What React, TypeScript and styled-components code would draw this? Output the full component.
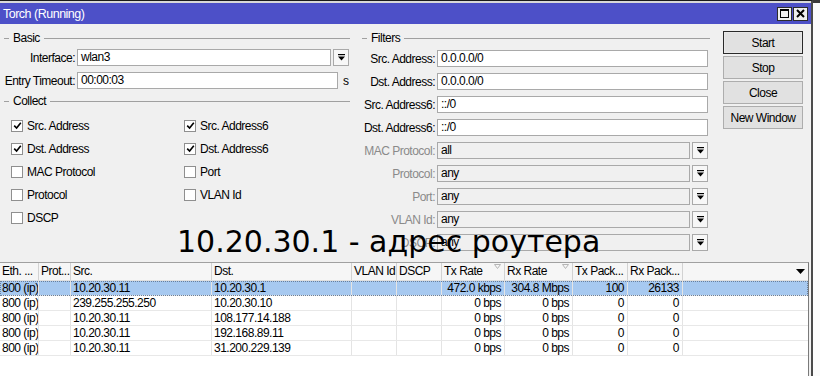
import styled, { createGlobalStyle } from "styled-components";

const FONT = `"Liberation Sans", Arial, sans-serif`;

const GlobalStyle = createGlobalStyle`
  html, body {
    margin: 0;
    padding: 0;
    background: #fff;
    overflow: hidden;
  }
  body {
    font-family: ${FONT};
    font-size: 12px;
    letter-spacing: -0.5px;
    color: #000;
  }
`;

// Экран и окно
const Screen = styled.div`
  width: 820px;
  height: 376px;
  display: flex;
  position: relative;
  overflow: hidden;
  background: #fff;
`;

const Window = styled.div`
  width: 813px;
  height: 376px;
  flex: none;
  box-sizing: border-box;
  display: flex;
  flex-direction: column;
  background: #f0f0f0;
  border-top: 1px solid #1b1b1b;
  border-right: 2px solid #4a4a4a;
`;

const SideStrip = styled.div`
  flex: 1;
  background: #fbfbfb;
  border-top: 3px solid #3a3a3a;
`;

const TitleBar = styled.div`
  height: 21px;
  flex: none;
  display: flex;
  align-items: center;
  justify-content: space-between;
  padding: 0 3px 0 3px;
  background: #4d50c8;
  border-top: 2px solid #d9d9d9;
  color: #fff;
`;

const TitleText = styled.span`
  font-size: 12.5px;
`;

const TitleButtons = styled.div`
  display: flex;
  gap: 1px;
`;

const TitleButton = styled.div`
  width: 15px;
  height: 14px;
  box-sizing: border-box;
  border: 1px solid #2c2c2c;
  background: #eeeeee;
  display: grid;
  place-items: center;
`;

// Верхняя часть: группы и кнопки
const TopArea = styled.div`
  height: 238px;
  flex: none;
  display: flex;
`;

const LeftColumn = styled.div`
  width: 355px;
  flex: none;
  padding-top: 7px;
  box-sizing: border-box;
`;

const FiltersColumn = styled.div`
  width: 352px;
  margin-left: 5px;
  flex: none;
  padding-top: 7px;
  box-sizing: border-box;
`;

const ButtonsColumn = styled.div`
  width: 80px;
  margin-left: 11px;
  padding-top: 7px;
  display: flex;
  flex-direction: column;
  gap: 2px;
`;

const GroupTitle = styled.div<{ $indent: number; $end: number; $top?: number }>`
  display: flex;
  align-items: center;
  height: 14px;
  gap: 4px;
  margin-top: ${(p) => p.$top ?? 0}px;
  margin-right: ${(p) => p.$end}px;

  &::before {
    content: "";
    width: 5px;
    height: 1px;
    margin-left: ${(p) => p.$indent}px;
    background: #a0a0a0;
  }
  &::after {
    content: "";
    flex: 1;
    height: 1px;
    background: #a0a0a0;
  }
`;

const Rows = styled.div<{ $top: number }>`
  margin-top: ${(p) => p.$top}px;
`;

const FieldRow = styled.div`
  display: flex;
  align-items: center;
  height: 23px;
`;

const FieldLabel = styled.span<{ $width: number; $muted?: boolean }>`
  width: ${(p) => p.$width}px;
  flex: none;
  text-align: right;
  white-space: nowrap;
  color: ${(p) => (p.$muted ? "#8a8a8a" : "#000")};
`;

const TextBox = styled.div<{ $width: number; $muted?: boolean }>`
  width: ${(p) => p.$width}px;
  height: 17px;
  flex: none;
  box-sizing: border-box;
  margin-left: 2px;
  padding: 0 3px;
  line-height: 15px;
  border: 1px solid #a9a9a9;
  background: ${(p) => (p.$muted ? "#f0f0f0" : "#fff")};
  white-space: nowrap;
  overflow: hidden;
`;

const DropButton = styled.div`
  width: 16px;
  height: 17px;
  flex: none;
  box-sizing: border-box;
  margin-left: 2px;
  border: 1px solid #a9a9a9;
  background: #f7f7f7;
  display: grid;
  place-items: center;
`;

const Unit = styled.span`
  margin-left: 5px;
`;

const CheckGrid = styled.div`
  margin-top: 6px;
  padding-left: 11px;
  display: grid;
  grid-template-columns: 173px 1fr;
  grid-auto-rows: 23px;
`;

const CheckItem = styled.label`
  display: flex;
  align-items: center;
  gap: 4px;
`;

const Box = styled.span`
  width: 12px;
  height: 12px;
  box-sizing: border-box;
  border: 1px solid #8f8f8f;
  background: #fff;
  display: grid;
  place-items: center;
`;

const Button = styled.div<{ $primary?: boolean }>`
  height: 23px;
  box-sizing: border-box;
  display: flex;
  align-items: center;
  justify-content: center;
  background: #e1e1e1;
  border: 1px solid ${(p) => (p.$primary ? "#2a2a2a" : "#adadad")};
  box-shadow: ${(p) => (p.$primary ? "inset 0 0 0 1px #e8e8e8" : "none")};
`;

// Таблица
const COLUMNS = "39px 32px 141px 140px 45px 45px 63px 68px 55px 55px 1fr";

const Table = styled.div`
  flex: 1;
  width: 809px;
  box-sizing: border-box;
  background: #fff;
  border-top: 1px solid #a0a0a0;
  border-right: 1px solid #7a7a7a;
`;

const HeaderRow = styled.div`
  display: grid;
  grid-template-columns: ${COLUMNS};
  height: 17px;
  background: #f6f6f6;
  border-bottom: 1px solid #e0e0e0;
`;

const HeaderCell = styled.div`
  position: relative;
  padding-left: 2px;
  line-height: 17px;
  white-space: nowrap;
  overflow: hidden;
  border-right: 1px solid #d2d2d2;

  &:last-child {
    border-right: none;
  }
`;

const SortMark = styled.svg`
  position: absolute;
  top: 1px;
  right: 3px;
`;

const MenuMark = styled.svg`
  position: absolute;
  top: 6px;
  right: 3px;
`;

const DataRow = styled.div<{ $selected?: boolean }>`
  display: grid;
  grid-template-columns: ${COLUMNS};
  height: 15px;
  box-sizing: border-box;
  border-bottom: 1px solid #e8e8e8;
  background: ${(p) => (p.$selected ? "#a7c9f0" : "#fff")};
  outline: ${(p) => (p.$selected ? "1px dotted #6a7f9a" : "none")};
  outline-offset: -1px;
`;

const Cell = styled.div<{ $right?: boolean }>`
  line-height: 14px;
  padding: 0 3px 0 2px;
  text-align: ${(p) => (p.$right ? "right" : "left")};
  white-space: nowrap;
  overflow: hidden;
  border-right: 1px solid #e4e4e4;

  &:last-child {
    border-right: none;
  }
`;

// Надпись поверх окна
const Caption = styled.div`
  position: absolute;
  left: 177px;
  top: 227px;
  font-family: "DejaVu Sans", sans-serif;
  font-size: 30px;
  line-height: 30px;
  letter-spacing: 0;
  color: #000;
  white-space: nowrap;
`;

const DropIcon = () => (
  <svg width="7" height="7" viewBox="0 0 7 7">
    <rect x="0" y="0" width="7" height="1.2" fill="#000" />
    <polygon points="0,2.4 7,2.4 3.5,6.4" fill="#000" />
  </svg>
);

const CheckIcon = () => (
  <svg width="9" height="9" viewBox="0 0 9 9">
    <path d="M1.2 4.6 L3.6 7 L7.8 1.8" fill="none" stroke="#000" strokeWidth="1.6" />
  </svg>
);

const collect = [
  { label: "Src. Address", on: true },
  { label: "Src. Address6", on: true },
  { label: "Dst. Address", on: true },
  { label: "Dst. Address6", on: true },
  { label: "MAC Protocol", on: false },
  { label: "Port", on: false },
  { label: "Protocol", on: false },
  { label: "VLAN Id", on: false },
  { label: "DSCP", on: false },
];

const filters = [
  { label: "Src. Address:", value: "0.0.0.0/0" },
  { label: "Dst. Address:", value: "0.0.0.0/0" },
  { label: "Src. Address6:", value: "::/0" },
  { label: "Dst. Address6:", value: "::/0" },
  { label: "MAC Protocol:", value: "all", combo: true },
  { label: "Protocol:", value: "any", combo: true },
  { label: "Port:", value: "any", combo: true },
  { label: "VLAN Id:", value: "any", combo: true },
  { label: "DSCP:", value: "any", combo: true },
];

const headers = [
  "Eth. ...",
  "Prot...",
  "Src.",
  "Dst.",
  "VLAN Id",
  "DSCP",
  "Tx Rate",
  "Rx Rate",
  "Tx Pack...",
  "Rx Pack...",
  "",
];

const traffic = [
  ["800 (ip)", "", "10.20.30.11", "10.20.30.1", "", "", "472.0 kbps", "304.8 Mbps", "100", "26133"],
  ["800 (ip)", "", "239.255.255.250", "10.20.30.10", "", "", "0 bps", "0 bps", "0", "0"],
  ["800 (ip)", "", "10.20.30.11", "108.177.14.188", "", "", "0 bps", "0 bps", "0", "0"],
  ["800 (ip)", "", "10.20.30.11", "192.168.89.11", "", "", "0 bps", "0 bps", "0", "0"],
  ["800 (ip)", "", "10.20.30.11", "31.200.229.139", "", "", "0 bps", "0 bps", "0", "0"],
];

const App = () => {
  return (
    <>
      <GlobalStyle />
      <Screen>
        <Window>
          <TitleBar>
            <TitleText>Torch (Running)</TitleText>
            <TitleButtons>
              <TitleButton>
                <svg width="9" height="9" viewBox="0 0 9 9">
                  <rect x="0.5" y="0.5" width="8" height="8" fill="none" stroke="#000" />
                  <rect x="0.5" y="0.5" width="8" height="1.5" fill="#000" />
                </svg>
              </TitleButton>
              <TitleButton>
                <svg width="9" height="9" viewBox="0 0 9 9">
                  <path d="M1 1 L8 8 M8 1 L1 8" stroke="#000" strokeWidth="2" />
                </svg>
              </TitleButton>
            </TitleButtons>
          </TitleBar>

          <TopArea>
            <LeftColumn>
              <GroupTitle $indent={4} $end={5}>Basic</GroupTitle>
              <Rows $top={1}>
                <FieldRow>
                  <FieldLabel $width={75}>Interface:</FieldLabel>
                  <TextBox $width={254}>wlan3</TextBox>
                  <DropButton>
                    <DropIcon />
                  </DropButton>
                </FieldRow>
                <FieldRow>
                  <FieldLabel $width={75}>Entry Timeout:</FieldLabel>
                  <TextBox $width={261}>00:00:03</TextBox>
                  <Unit>s</Unit>
                </FieldRow>
              </Rows>

              <GroupTitle $indent={4} $end={5} $top={2}>
                Collect
              </GroupTitle>
              <CheckGrid>
                {collect.map((c) => (
                  <CheckItem key={c.label}>
                    <Box>{c.on && <CheckIcon />}</Box>
                    {c.label}
                  </CheckItem>
                ))}
              </CheckGrid>
            </LeftColumn>

            <FiltersColumn>
              <GroupTitle $indent={2} $end={2}>Filters</GroupTitle>
              <Rows $top={2}>
                {filters.map((f) => (
                  <FieldRow key={f.label}>
                    <FieldLabel $width={75} $muted={f.combo}>
                      {f.label}
                    </FieldLabel>
                    <TextBox $width={f.combo ? 253 : 271} $muted={f.combo}>
                      {f.value}
                    </TextBox>
                    {f.combo && (
                      <DropButton>
                        <DropIcon />
                      </DropButton>
                    )}
                  </FieldRow>
                ))}
              </Rows>
            </FiltersColumn>

            <ButtonsColumn>
              <Button $primary>Start</Button>
              <Button>Stop</Button>
              <Button>Close</Button>
              <Button>New Window</Button>
            </ButtonsColumn>
          </TopArea>

          <Table>
            <HeaderRow>
              {headers.map((h, i) => (
                <HeaderCell key={i}>
                  {h}
                  {(h === "Tx Rate" || h === "Rx Rate") && (
                    <SortMark width="7" height="5" viewBox="0 0 7 5">
                      <polygon points="0.5,0.5 6.5,0.5 3.5,4.5" fill="none" stroke="#b5b5b5" />
                    </SortMark>
                  )}
                  {i === headers.length - 1 && (
                    <MenuMark width="9" height="5" viewBox="0 0 9 5">
                      <polygon points="0,0 9,0 4.5,5" fill="#000" />
                    </MenuMark>
                  )}
                </HeaderCell>
              ))}
            </HeaderRow>
            {traffic.map((r, i) => (
              <DataRow key={i} $selected={i === 0}>
                {r.map((v, j) => (
                  <Cell key={j} $right={j >= 6}>
                    {v}
                  </Cell>
                ))}
                <Cell />
              </DataRow>
            ))}
          </Table>
        </Window>
        <SideStrip />
        <Caption>10.20.30.1 - адрес роутера</Caption>
      </Screen>
    </>
  );
};

export default App;
